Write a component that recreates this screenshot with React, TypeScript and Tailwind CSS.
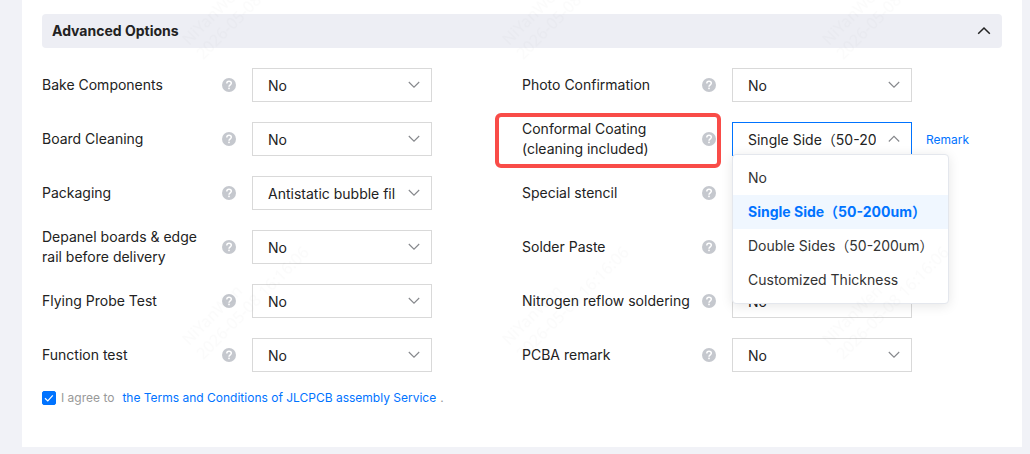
import { useState } from "react"

type Option = {
  id: string
  label: string
  values: string[]
}

const coatings = ["No", "Single Side（50-200um）", "Double Sides（50-200um）", "Customized Thickness"]

// listed row by row, left column first
const options: Option[] = [
  { id: "bake", label: "Bake Components", values: ["No", "Yes"] },
  { id: "photo", label: "Photo Confirmation", values: ["No", "Yes"] },
  { id: "cleaning", label: "Board Cleaning", values: ["No", "Yes"] },
  { id: "coating", label: "Conformal Coating (cleaning included)", values: coatings },
  { id: "packaging", label: "Packaging", values: ["Antistatic bubble film", "Other"] },
  { id: "stencil", label: "Special stencil", values: ["No", "Yes"] },
  { id: "depanel", label: "Depanel boards & edge rail before delivery", values: ["No", "Yes"] },
  { id: "paste", label: "Solder Paste", values: ["No", "Yes"] },
  { id: "probe", label: "Flying Probe Test", values: ["No", "Yes"] },
  { id: "nitrogen", label: "Nitrogen reflow soldering", values: ["No", "Yes"] },
  { id: "function", label: "Function test", values: ["No", "Yes"] },
  { id: "remark", label: "PCBA remark", values: ["No", "Yes"] },
]

function Chevron({ up = false }: { up?: boolean }) {
  return (
    <svg
      viewBox="0 0 12 12"
      fill="none"
      stroke="#85878b"
      strokeWidth="1.1"
      className="pointer-events-none absolute right-3 top-[10px] size-3"
    >
      <path d={up ? "M0.8 9.5 L6 4.3 L11.2 9.5" : "M0.8 4 L6 9.2 L11.2 4"} />
    </svg>
  )
}

function HelpIcon() {
  return (
    <svg viewBox="0 0 14 14" className="size-3.5">
      <circle cx="7" cy="7" r="7" fill="#c5c8ce" />
      <path
        d="M4.8 5.4C4.8 4 5.7 3.2 7 3.2S9.3 4 9.3 5.2C9.3 6.8 7 6.9 7 8.8"
        fill="none"
        stroke="#fff"
        strokeWidth="1.5"
      />
      <rect x="6.2" y="9.6" width="1.6" height="1.6" fill="#fff" />
    </svg>
  )
}

function Watermark() {
  return (
    <svg aria-hidden="true" className="pointer-events-none absolute inset-0 z-20 h-full w-full">
      <defs>
        <pattern id="mark" x="160" y="78" width="320" height="300" patternUnits="userSpaceOnUse">
          <g
            transform="translate(29 268) rotate(-45)"
            fill="#000"
            fillOpacity="0.015"
            fontSize="16"
            fontFamily="'Noto Sans', sans-serif"
          >
            <text>NiYanWen</text>
            <text y="20">2026-05-08 16:16:06</text>
          </g>
        </pattern>
      </defs>
      <rect width="100%" height="100%" fill="url(#mark)" />
    </svg>
  )
}

function OptionRow({ option }: { option: Option }) {
  const isCoating = option.id === "coating"
  const [value, setValue] = useState(isCoating ? option.values[1] : option.values[0])
  const [open, setOpen] = useState(isCoating)

  return (
    <div className="flex min-h-[54px] items-center">
      <div className="relative flex items-center self-stretch">
        <label htmlFor={option.id} className="w-[172px] pr-1 text-sm leading-5">
          {option.label}
        </label>
        <button type="button" aria-label={`Help: ${option.label}`} className="ml-2">
          <HelpIcon />
        </button>
        {isCoating && (
          <div className="pointer-events-none absolute -bottom-0.5 -left-[27px] -right-[5px] top-px rounded-md border-4 border-[#f94c48]" />
        )}
      </div>
      <div className="relative ml-4">
        <select
          id={option.id}
          value={value}
          onChange={(e) => setValue(e.target.value)}
          className={`block h-[34px] w-[180px] appearance-none border bg-white pl-[15px] pr-[35px] pt-0.5 text-sm outline-none ${
            open ? "border-[#0073ff]" : "border-[#d9d9d9]"
          }`}
        >
          {option.values.map((item) => (
            <option key={item}>{item}</option>
          ))}
        </select>
        <Chevron up={open} />
        {open && (
          <ul className="absolute left-0 top-8 z-10 w-max rounded-sm border border-[#e4e7ed] bg-white py-1.5 shadow-[0_2px_12px_rgba(0,0,0,0.1)]">
            {option.values.map((item) => (
              <li key={item}>
                <button
                  type="button"
                  onClick={() => {
                    setValue(item)
                    setOpen(false)
                  }}
                  className={`block h-[34px] w-full px-[15px] text-left text-sm ${
                    item === value ? "bg-[#f0f7ff] font-bold text-[#0073ff]" : "text-[#333333]"
                  }`}
                >
                  {item}
                </button>
              </li>
            ))}
          </ul>
        )}
      </div>
      {isCoating && (
        <a href="#remark" className="ml-3.5 pt-0.5 text-xs text-[#0073ff]">
          Remark
        </a>
      )}
    </div>
  )
}

export default function App() {
  const [expanded, setExpanded] = useState(true)
  const [agreed, setAgreed] = useState(true)

  return (
    <div className="relative min-h-screen bg-[#f1f2f7] pb-[7px] pl-[22px] pr-2 font-[Inter,'Noto_Sans_CJK_SC',sans-serif] text-[#222222]">
      <main className="bg-white px-5 pb-[41px] pt-3.5">
        <button
          type="button"
          aria-expanded={expanded}
          onClick={() => setExpanded(!expanded)}
          className="flex h-[34px] w-full items-center justify-between rounded bg-[#edeef4] px-2.5 text-sm font-bold"
        >
          Advanced Options
          <svg viewBox="0 0 16 16" fill="none" stroke="#222" strokeWidth="1.5" className="size-4">
            <path d="M2.2 10.8 L8 5 L13.8 10.8" />
          </svg>
        </button>
        {expanded && (
          <div className="mt-2.5 grid grid-cols-2">
            {options.map((option) => (
              <OptionRow key={option.id} option={option} />
            ))}
          </div>
        )}
        <div className="mt-2 flex items-center text-xs leading-4 text-[#999999]">
          <div className="relative mr-[5px] size-3.5">
            <input
              id="agree"
              type="checkbox"
              checked={agreed}
              onChange={() => setAgreed(!agreed)}
              className="block size-3.5 appearance-none rounded-xs border border-[#0073ff] checked:bg-[#0073ff]"
            />
            {agreed && (
              <svg viewBox="0 0 14 14" fill="none" stroke="#fff" className="pointer-events-none absolute inset-0 size-3.5">
                <path d="M3 7.2 L5.8 9.9 L10.8 4.4" strokeWidth="1.2" />
              </svg>
            )}
          </div>
          <label htmlFor="agree" className="mr-2">
            I agree to
          </label>
          <a href="#terms" className="mr-1 text-[#0073ff]">
            the Terms and Conditions of JLCPCB assembly Service
          </a>
          .
        </div>
      </main>
      <Watermark />
    </div>
  )
}
